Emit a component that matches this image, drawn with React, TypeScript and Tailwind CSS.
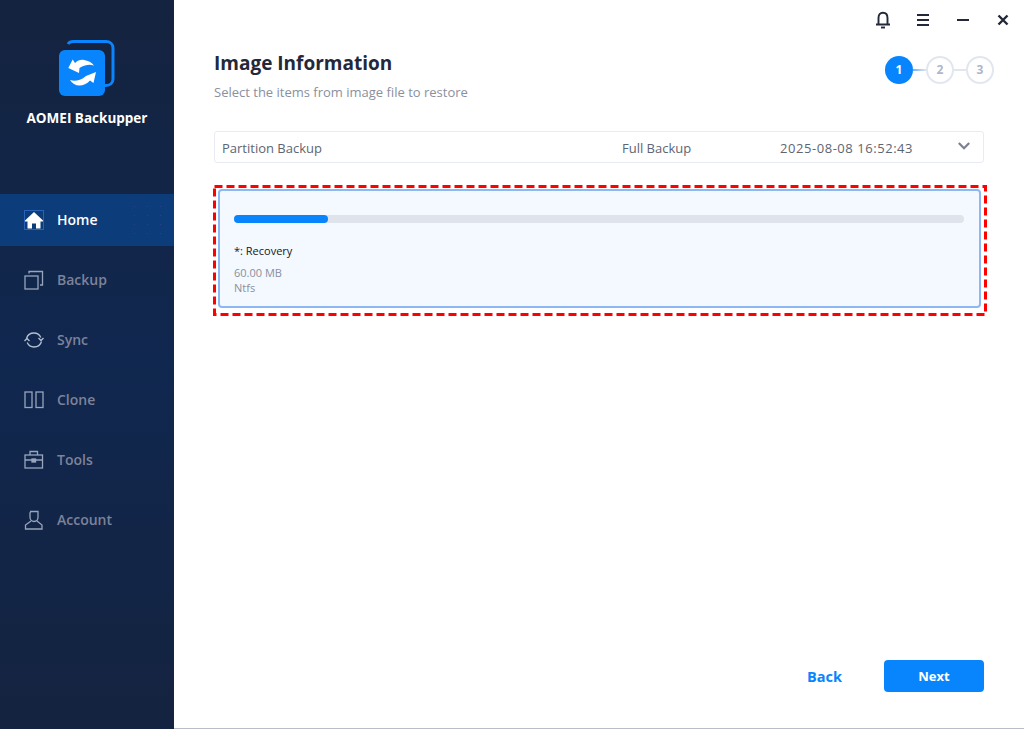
import type { ReactNode } from 'react'

const font = "font-['Open_Sans','Noto_Sans',sans-serif]"

const LogoIcon = () => (
  <svg width="56" height="56" viewBox="0 0 56 56" fill="none">
    <path d="M9 4C10 2.500 11.500 1.500 14 1.500H47C51 1.500 54 4 54 8V39C54 43 51 45.500 47 45.500H45" stroke="#0a84ff" strokeWidth="3" />
    <rect x="0" y="10" width="46" height="46" rx="6" fill="#0885fd" />
    <path d="M9.300 28L13.700 19.500L16 23C19 20 22 19.500 25 20C29 20.500 33 22.500 35 25.500C32 24.500 29 24.500 26 25.500C24 26 22 27 20.500 28L20 33Z" fill="#fff" />
    <path d="M37 32L34.500 43L31 40.500C28 44 24 45.500 20.500 45.500C16.500 45.500 13 43.500 11 40C14 41 17 41 20 40C23 39 25.500 37.500 27 36Z" fill="#fff" />
  </svg>
)

const HomeIcon = () => (
  <svg width="20" height="20" viewBox="0 0 20 20" fill="#fff">
    <rect x="0.500" y="0.500" width="19" height="19" fill="none" stroke="#2a62b8" />
    <path d="M10 2L1 10.500V11.500H3.500V18.500H8V13.500H12V18.500H16.500V11.500H19V10.500Z" />
  </svg>
)

const BackupIcon = () => (
  <svg width="20" height="20" viewBox="0 0 20 20" fill="none" stroke="#98a5bc" strokeWidth="1.300">
    <rect x="1" y="6" width="13" height="13" />
    <path d="M5 3.500V1.500H18.500V15H16" />
  </svg>
)

const SyncIcon = () => (
  <svg width="20" height="20" viewBox="0 0 20 20" fill="none" stroke="#b4c0d4" strokeWidth="1.300">
    <path d="M2.500 8.500C3.500 5 6.500 3 10 3C13 3 15.500 4.500 16.800 7.500" />
    <path d="M17.500 11.500C16.500 15 13.500 17 10 17C7 17 4.500 15.500 3.200 12.500" />
    <path d="M0.500 12L3 9.500L5.500 12" transform="translate(0 -1)" />
    <path d="M14.500 8L17 10.500L19.500 8" />
  </svg>
)

const CloneIcon = () => (
  <svg width="20" height="20" viewBox="0 0 20 20" fill="none" stroke="#98a5bc" strokeWidth="1.300">
    <rect x="1" y="2" width="7" height="15.500" />
    <rect x="12" y="2" width="7" height="15.500" />
  </svg>
)

const ToolsIcon = () => (
  <svg width="20" height="20" viewBox="0 0 20 20" fill="none" stroke="#98a5bc" strokeWidth="1.300">
    <rect x="1" y="5" width="17.500" height="13" />
    <path d="M6 5V1.500H13.500V5M1 10H18.500" />
    <rect x="8" y="9" width="3.500" height="3" fill="#98a5bc" />
  </svg>
)

const AccountIcon = () => (
  <svg width="20" height="20" viewBox="0 0 20 20" fill="none" stroke="#98a5bc" strokeWidth="1.300">
    <path d="M6 1.500H14V7C14 10 12 11.500 10 11.500C8 11.500 6 10 6 7V3.500C6 2.500 6.500 1.500 7.500 1.500" />
    <path d="M7 11L1.500 15V19H18V15L13 11" />
  </svg>
)

const navItems: { label: string; icon: ReactNode; active?: boolean }[] = [
  { label: 'Home', icon: <HomeIcon />, active: true },
  { label: 'Backup', icon: <BackupIcon /> },
  { label: 'Sync', icon: <SyncIcon /> },
  { label: 'Clone', icon: <CloneIcon /> },
  { label: 'Tools', icon: <ToolsIcon /> },
  { label: 'Account', icon: <AccountIcon /> },
]

const Sidebar = () => (
  <aside className="flex w-[174px] shrink-0 flex-col bg-gradient-to-b from-[#14233f] via-[#10274f] to-[#14233f]">
    <div className="flex h-[190px] flex-col items-center pt-[40px]">
      <div className="mr-[1px]">
        <LogoIcon />
      </div>
      <div className="mt-[12px] text-[13.500px] leading-5 font-bold text-white">AOMEI Backupper</div>
    </div>
    <nav>
      {navItems.map((item) => (
        <div key={item.label} className="flex h-[60px] items-center">
          <div
            className={
              item.active
                ? 'relative flex h-[52px] w-full items-center gap-[13px] bg-[#0c3d7a] pl-[24px]'
                : 'flex h-[52px] w-full items-center gap-[13px] pl-[24px]'
            }
          >
            <span className="flex w-[20px] justify-center">{item.icon}</span>
            <span
              className={
                item.active
                  ? 'mt-[-1px] text-[14px] font-semibold text-white'
                  : 'mt-[-1px] text-[14px] font-semibold text-[#7d8299]'
              }
            >
              {item.label}
            </span>
            {item.active && (
              <div className="absolute top-[8px] right-[4px] h-[40px] w-[42px] bg-[radial-gradient(#27428a_0.7px,transparent_0.8px)] bg-[size:13px_9px]" />
            )}
          </div>
        </div>
      ))}
    </nav>
  </aside>
)

const TitleBar = () => (
  <div className="flex h-[40px] items-center justify-end pr-[15px] text-[#23283a]">
    <svg width="16" height="18" viewBox="0 0 16 18" fill="none" stroke="currentColor" strokeWidth="1.900" className="mr-[26px]">
      <path d="M1 13.500H15M3.500 13V7C3.500 3.500 5 1.800 8 1.800C11 1.800 12.500 3.500 12.500 7V13" />
      <path d="M6 16.500H10" />
    </svg>
    <svg width="12" height="12" viewBox="0 0 12 12" stroke="currentColor" strokeWidth="2" className="mr-[28px]">
      <path d="M0 1H12M0 6H12M0 11H12" />
    </svg>
    <svg width="12" height="2" viewBox="0 0 12 2" stroke="currentColor" strokeWidth="2" className="mr-[28px]">
      <path d="M0 1H12" />
    </svg>
    <svg width="12" height="12" viewBox="0 0 12 12" stroke="currentColor" strokeWidth="2.400">
      <path d="M1.500 1.500L10.500 10.500M10.500 1.500L1.500 10.500" />
    </svg>
  </div>
)

const Stepper = () => (
  <div className="flex items-center">
    <div className="flex size-[28px] items-center justify-center rounded-full bg-[#0885fd] text-[12px] font-bold text-white">1</div>
    <div className="h-[2px] w-[13px] bg-gradient-to-r from-[#6fb2f8] to-[#dfe4ec]" />
    <div className="flex size-[28px] items-center justify-center rounded-full border-2 border-[#e2e6ee] text-[12px] font-bold text-[#b0b6cb]">2</div>
    <div className="h-[2px] w-[12px] bg-[#e2e6ee]" />
    <div className="flex size-[28px] items-center justify-center rounded-full border-2 border-[#e2e6ee] text-[12px] font-bold text-[#b0b6cb]">3</div>
  </div>
)

const BackupRow = () => (
  <div className="mr-[40px] mt-[30px] flex h-[32px] items-center rounded-[3px] border border-[#e8ebf2] pt-[3px] pl-[7px] text-[13px] text-[#5d6573]">
    <span className="w-[400px]">Partition Backup</span>
    <span className="w-[158px]">Full Backup</span>
    <span className="w-[178px] tracking-[0.55px]">2025-08-08 16:52:43</span>
    <svg width="12" height="8" viewBox="0 0 12 8" fill="none" stroke="#7d7f92" strokeWidth="2.200" className="-mt-[5px]">
      <path d="M0.800 1L6 6.200L11.200 1" />
    </svg>
  </div>
)

const PartitionCard = () => (
  <div className="relative mr-[37px] -ml-[1px] mt-[22px] h-[131px] pt-[4px] pr-[6px] pb-[8px] pl-[5px]">
    <div className="h-full rounded-[4px] border-2 border-[#8db8f3] bg-[#f3f9ff] pt-[24px] pr-[15px] pl-[14px]">
      <div className="h-[8px] w-full rounded-full bg-[#dfe3eb]">
        <div className="h-full w-[94px] rounded-full bg-[#0885fd]" />
      </div>
      <div className="mt-[19px] text-[11px] leading-[18px] font-medium text-[#14171f]">*: Recovery</div>
      <div className="mt-[5px] text-[11px] leading-[15px] text-[#8a8f9e]">60.00 MB</div>
      <div className="text-[11px] leading-[15px] text-[#8a8f9e]">Ntfs</div>
    </div>
    <svg width="774" height="131" fill="none" className="absolute top-0 left-0">
      <rect x="1.500" y="1.500" width="771" height="128" stroke="#ff0000" strokeWidth="3" strokeDasharray="8 4" />
    </svg>
  </div>
)

const Footer = () => (
  <div className="mt-auto flex items-center justify-end pb-[36px] pr-[40px]">
    <button className="mr-[42px] pt-[2px] text-[14.500px] font-bold text-[#0885fd]">Back</button>
    <button className="h-[32px] w-[100px] rounded-[4px] bg-[#0885fd] pt-[2px] text-[13px] font-bold text-white">Next</button>
  </div>
)

export default function App() {
  return (
    <div className={`flex h-[729px] w-[1024px] overflow-hidden bg-white ${font}`}>
      <Sidebar />
      <main className="flex flex-1 flex-col border-b border-[#b9bdc9]">
        <TitleBar />
        <div className="flex flex-1 flex-col pl-[40px]">
          <div className="mt-[9px] flex items-start justify-between pr-[30px]">
            <div>
              <h1 className="text-[19px] leading-[28px] font-bold text-[#23283a]">Image Information</h1>
              <p className="mt-[6px] text-[13px] leading-[18px] text-[#8a8f9e]">Select the items from image file to restore</p>
            </div>
            <div className="mt-[7px]">
              <Stepper />
            </div>
          </div>
          <BackupRow />
          <PartitionCard />
          <Footer />
        </div>
      </main>
    </div>
  )
}
